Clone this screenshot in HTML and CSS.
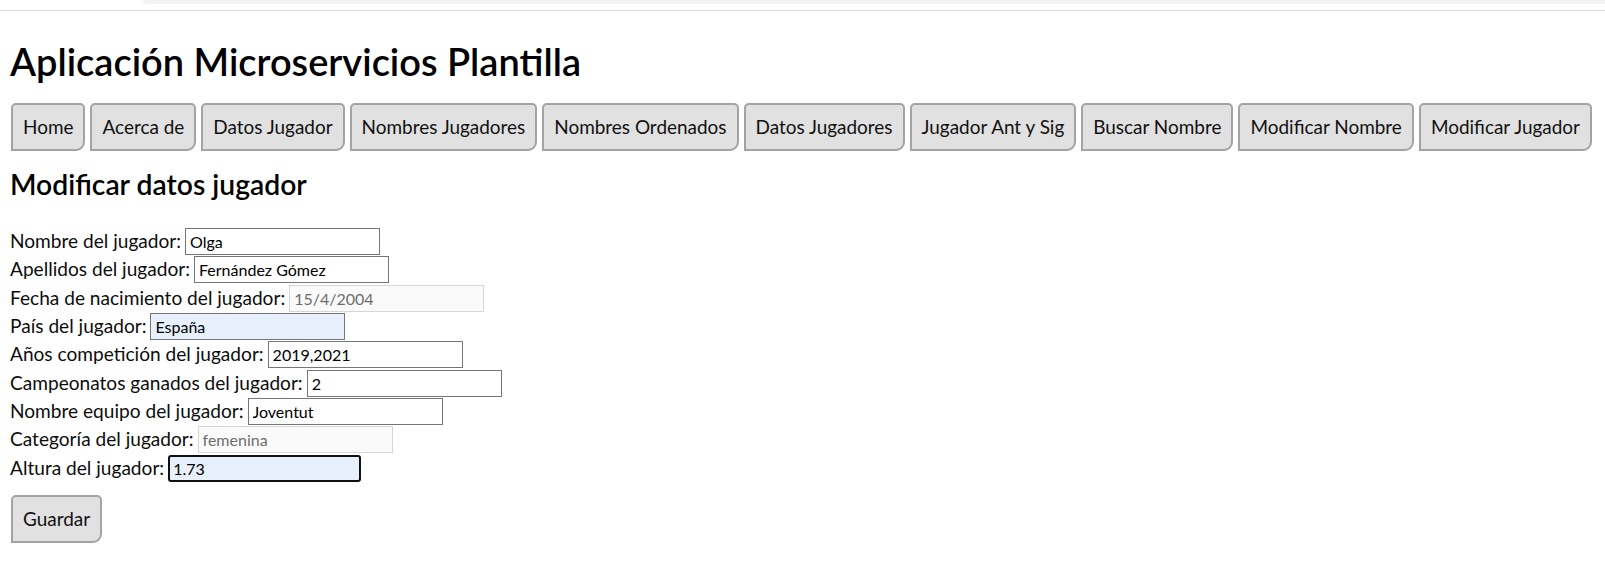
FILE: index.html
```html
<!DOCTYPE html>
<html lang="es">
<head>
<meta charset="utf-8">
<title>Aplicación Microservicios Plantilla</title>
<link rel="stylesheet" href="styles.css">
</head>
<body>
<div class="chrome"><div class="chrome-bar"></div></div>
<main class="page">
  <h1 class="title">Aplicación Microservicios Plantilla</h1>
  <nav class="nav">
    <button class="nav-btn">Home</button>
    <button class="nav-btn">Acerca de</button>
    <button class="nav-btn">Datos Jugador</button>
    <button class="nav-btn">Nombres Jugadores</button>
    <button class="nav-btn">Nombres Ordenados</button>
    <button class="nav-btn">Datos Jugadores</button>
    <button class="nav-btn">Jugador Ant y Sig</button>
    <button class="nav-btn">Buscar Nombre</button>
    <button class="nav-btn">Modificar Nombre</button>
    <button class="nav-btn">Modificar Jugador</button>
  </nav>
  <h2 class="subtitle">Modificar datos jugador</h2>
  <form class="form">
    <div class="row"><label class="lbl">Nombre del jugador:</label><input class="field" type="text" value="Olga"></div>
    <div class="row"><label class="lbl">Apellidos del jugador:</label><input class="field" type="text" value="Fernández Gómez"></div>
    <div class="row"><label class="lbl">Fecha de nacimiento del jugador:</label><input class="field" type="text" value="15/4/2004" disabled></div>
    <div class="row"><label class="lbl">País del jugador:</label><input class="field autofill" type="text" value="España"></div>
    <div class="row"><label class="lbl">Años competición del jugador:</label><input class="field" type="text" value="2019,2021"></div>
    <div class="row"><label class="lbl">Campeonatos ganados del jugador:</label><input class="field" type="text" value="2"></div>
    <div class="row"><label class="lbl">Nombre equipo del jugador:</label><input class="field" type="text" value="Joventut"></div>
    <div class="row"><label class="lbl">Categoría del jugador:</label><input class="field" type="text" value="femenina" disabled></div>
    <div class="row"><label class="lbl">Altura del jugador:</label><input class="field autofill focused" type="text" value="1.73"></div>
    <button class="save-btn" type="button">Guardar</button>
  </form>
</main>
</body>
</html>
```
FILE: styles.css
```css
html, body {
  margin: 0;
  padding: 0;
  background: #ffffff;
}
body {
  font-family: Lato, "Noto Sans", sans-serif;
  font-size: 19.1px;
  color: #0d0d0d;
}
.chrome {
  height: 10px;
  border-bottom: 1px solid #dcdcdc;
  display: flex;
}
.chrome-bar {
  margin-left: 143px;
  flex: 1;
  height: 4px;
  background: #f1f3f4;
  border-bottom-left-radius: 5px;
}
.page {
  padding: 0 10px;
}
.title {
  margin: 28px 0 0;
  font-size: 38px;
  line-height: 44px;
  font-weight: 600;
  color: #000;
}
.nav {
  margin-top: 20px;
  display: flex;
  gap: 5px;
  padding-left: 1px;
  white-space: nowrap;
}
.nav-btn, .save-btn {
  flex-shrink: 0;
  white-space: nowrap;
  font-family: inherit;
  font-size: 18.95px;
  line-height: 24px;
  padding: 10px 10px;
  border: 2px solid #a3a3a3;
  border-radius: 5px 5px 9px 0;
  background: #e1e1e1;
  color: #111;
  cursor: pointer;
}
.subtitle {
  margin: 17px 0 0;
  font-size: 28.3px;
  line-height: 33px;
  font-weight: 600;
  color: #000;
}
.form {
  margin-top: 27px;
}
.row {
  display: flex;
  align-items: baseline;
  height: 28.33px;
}
.lbl {
  white-space: nowrap;
}
.field {
  box-sizing: border-box;
  width: 195px;
  height: 27px;
  margin-left: 4px;
  padding: 1px 4px;
  font-family: inherit;
  font-size: 16px;
  color: #000;
  border: 1px solid #767676;
  border-radius: 0;
  background: #fff;
  outline: none;
}
.field:disabled {
  background: #fafafa;
  border-color: #d6d6d6;
  color: #6d6d6d;
}
.autofill {
  background: #e8f0fe;
}
.focused {
  border: 2px solid #101010;
  border-radius: 3px;
  padding: 0 3px;
  width: 193px;
}
.save-btn {
  margin: 12px 0 0 1px;
}
```
